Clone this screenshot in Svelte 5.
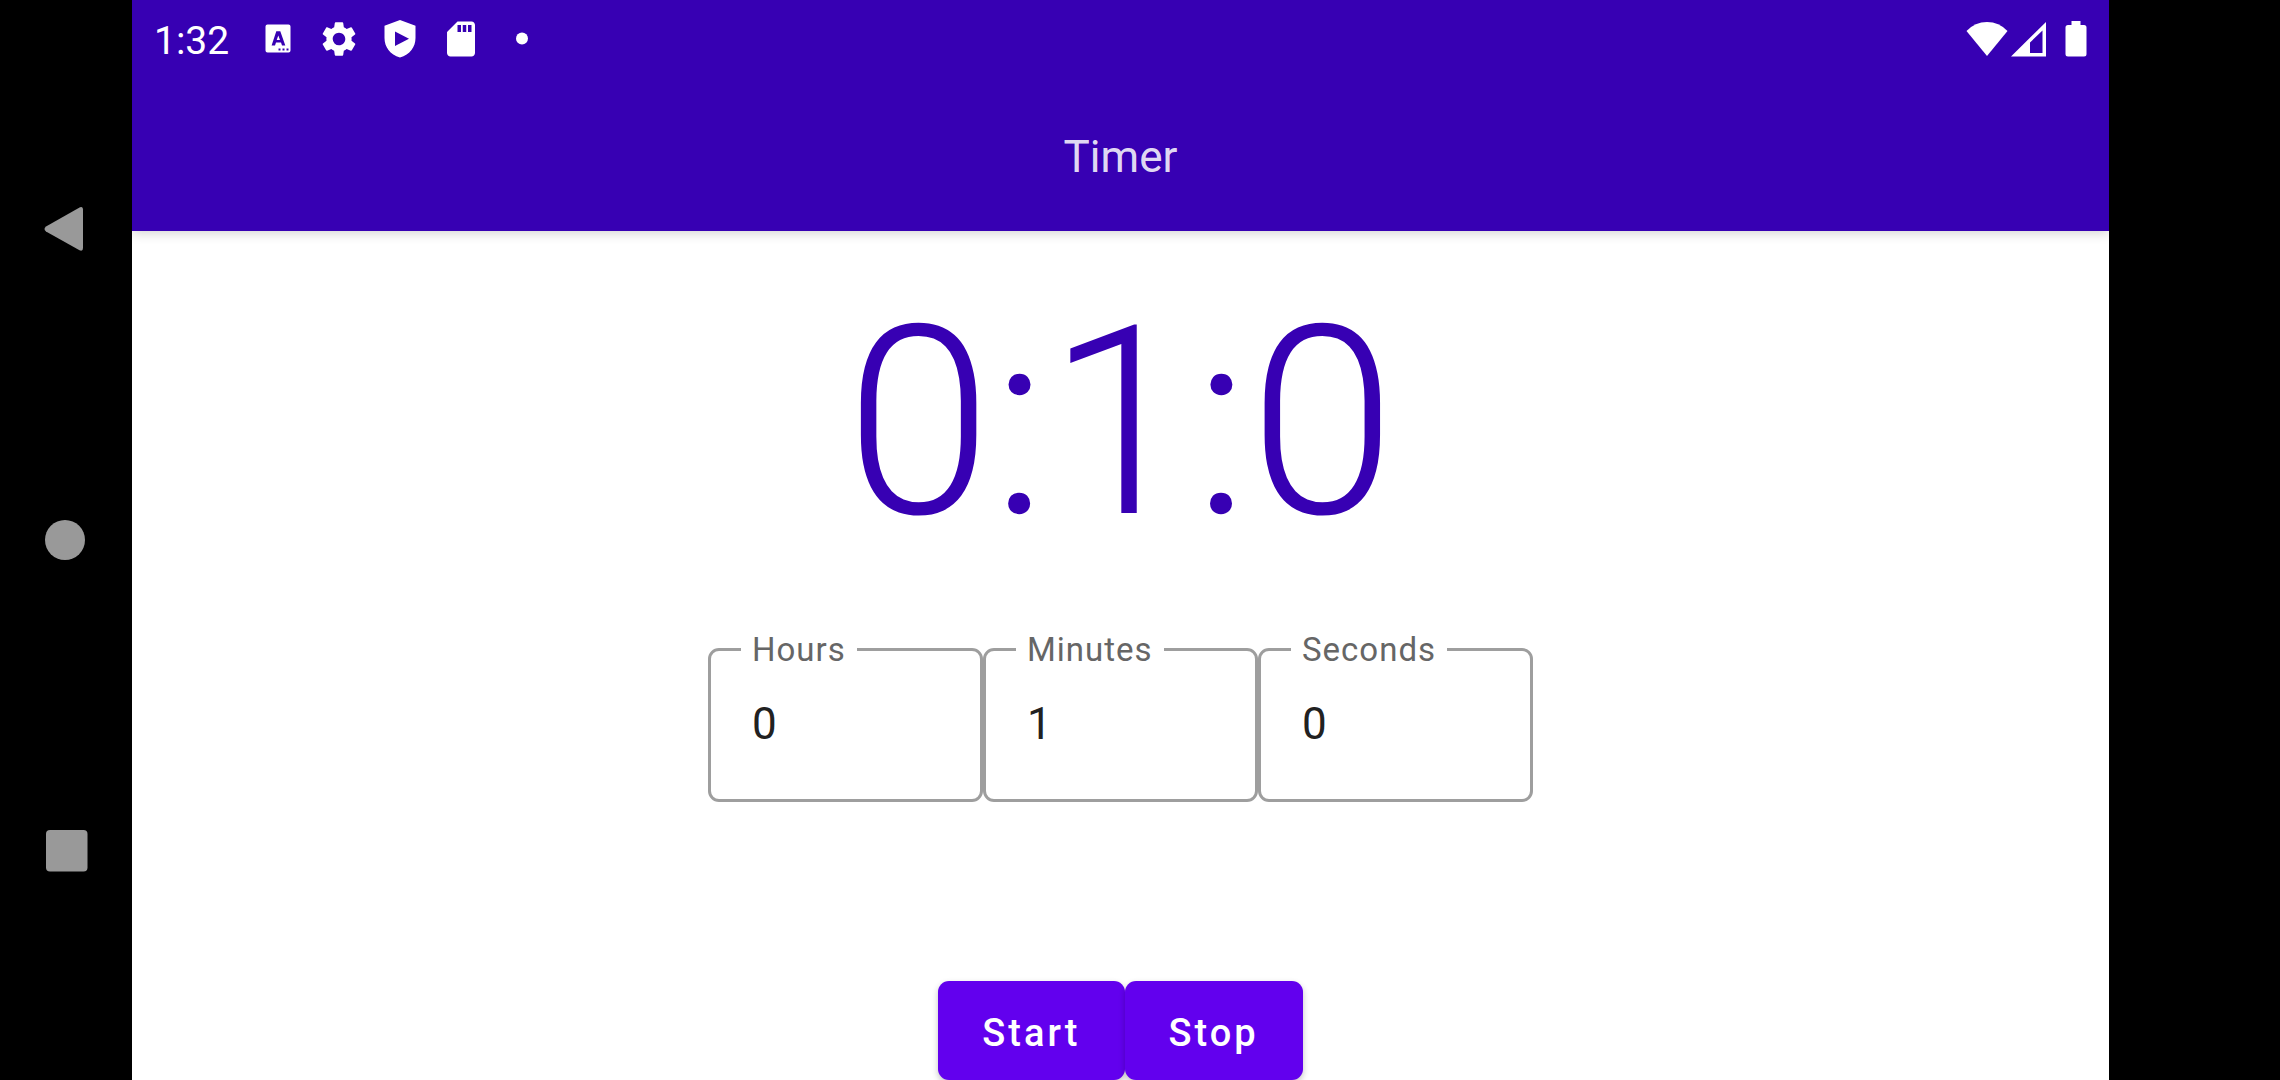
<script>
  import { onDestroy } from 'svelte';

  let fields = $state([
    { id: 'hours', label: 'Hours', value: '0' },
    { id: 'minutes', label: 'Minutes', value: '1' },
    { id: 'seconds', label: 'Seconds', value: '0' }
  ]);
  let left = $state(60);
  let ticker;

  const display = $derived(
    [Math.floor(left / 3600), Math.floor(left / 60) % 60, left % 60].join(':')
  );

  function reset() {
    const [h, m, s] = fields.map((f) => parseInt(f.value, 10) || 0);
    left = h * 3600 + m * 60 + s;
  }

  function stop() {
    clearInterval(ticker);
  }

  function start() {
    stop();
    ticker = setInterval(() => {
      if (left > 0) left -= 1;
      else stop();
    }, 1000);
  }

  onDestroy(stop);
</script>

<div class="screen">
  <nav class="system-nav" aria-label="System navigation">
    <button type="button" aria-label="Back">
      <svg viewBox="0 0 66 66"><path d="M47 11.300Q50 10 50 13.500V52Q50 55.700 46.500 54.300L13 35.500Q10 33 13 30.500Z" /></svg>
    </button>
    <button type="button" aria-label="Home">
      <svg viewBox="0 0 66 66"><circle cx="32" cy="33" r="20" /></svg>
    </button>
    <button type="button" aria-label="Recent apps">
      <svg viewBox="0 0 66 66"><rect x="13" y="12" width="41.500" height="41.500" rx="4" /></svg>
    </button>
  </nav>

  <div class="app">
    <header>
      <div class="status">
        <time>1:32</time>
        <div class="notices">
          <svg viewBox="0 0 42 42">
            <path fill-rule="evenodd" d="M10.500 6.500h21a2 2 0 0 1 2 2v24a2 2 0 0 1-2 2h-21a2 2 0 0 1-2-2v-24a2 2 0 0 1 2-2ZM19.300 13.200 14.600 27.500h3.400l1-3h5l1 3h3.300L23.300 13.200ZM21.300 17.500l1.700 4.600h-3.300ZM21.500 30.500v2h2v-2ZM25.500 30.500v2h2v-2ZM29.500 30.500v2h2v-2Z" />
          </svg>
          <svg viewBox="0 0 24 24">
            <path d="M19.140 12.940c.04-.3.06-.61.06-.94 0-.32-.02-.64-.07-.94l2.030-1.580a.49.49 0 0 0 .12-.61l-1.920-3.320a.488.488 0 0 0-.59-.22l-2.390.96c-.5-.38-1.030-.7-1.620-.94l-.36-2.540a.484.484 0 0 0-.48-.41h-3.840c-.24 0-.43.17-.47.41l-.36 2.540c-.59.24-1.130.57-1.620.94l-2.390-.96c-.22-.08-.47 0-.59.22L2.740 8.870c-.12.21-.08.47.12.61l2.030 1.580c-.05.3-.09.63-.09.94s.02.64.07.94l-2.030 1.580a.49.49 0 0 0-.12.61l1.920 3.320c.12.22.37.29.59.22l2.390-.96c.5.38 1.030.7 1.620.94l.36 2.540c.05.24.24.41.48.41h3.840c.24 0 .44-.17.47-.41l.36-2.540c.59-.24 1.130-.56 1.620-.94l2.390.96c.22.08.47 0 .59-.22l1.920-3.320c.12-.22.07-.47-.12-.61l-2.010-1.580ZM12 15.600A3.610 3.610 0 0 1 8.400 12c0-1.980 1.620-3.600 3.600-3.600s3.600 1.620 3.600 3.600-1.620 3.600-3.600 3.600Z" />
          </svg>
          <svg viewBox="0 0 42 42">
            <path fill-rule="evenodd" d="M21 2 36.500 7.700V20C36.500 29 31 36.500 21 39.500 11 36.500 5.500 29 5.500 20V7.700ZM16 13.500V28L30 20.700Z" />
          </svg>
          <svg viewBox="0 0 24 24">
            <path d="M18 2h-8L4.020 8 4 20c0 1.100.9 2 2 2h12c1.100 0 2-.9 2-2V4c0-1.100-.9-2-2-2Zm-6 6h-2V4h2v4Zm3 0h-2V4h2v4Zm3 0h-2V4h2v4Z" />
          </svg>
          <svg viewBox="0 0 42 42"><circle cx="21" cy="20.500" r="6" /></svg>
        </div>
        <div class="signals">
          <svg viewBox="0 0 42 42"><path d="M.5 13Q9 4 21 4T41.500 13L21 38Z" /></svg>
          <svg viewBox="0 0 42 42"><path fill-rule="evenodd" d="M3 38.500 38 4V38.500ZM22 24.500V35H34.500V12.500Z" /></svg>
          <svg class="battery" viewBox="0 0 42 42"><path d="M16.500 3h9v4H29a2.500 2.500 0 0 1 2.500 2.500V36a2.500 2.500 0 0 1-2.500 2.500H13a2.500 2.500 0 0 1-2.500-2.500V9.500A2.500 2.500 0 0 1 13 7h3.500Z" /></svg>
        </div>
      </div>
      <h1>Timer</h1>
    </header>

    <main>
      <div class="display" role="timer">{display}</div>
      <div class="fields">
        {#each fields as field (field.id)}
          <fieldset>
            <legend><label for={field.id}>{field.label}</label></legend>
            <input id={field.id} type="text" inputmode="numeric" bind:value={field.value} oninput={reset} />
          </fieldset>
        {/each}
      </div>
      <div class="actions">
        <button type="button" onclick={start}>Start</button>
        <button type="button" onclick={stop}>Stop</button>
      </div>
    </main>
  </div>
</div>

<style>
  :global(body) {
    margin: 0;
    background: #000;
  }

  .screen {
    display: flex;
    min-height: 100vh;
    padding-right: 171px;
    box-sizing: border-box;
    font-family: Roboto, 'Liberation Sans', sans-serif;
  }

  button {
    border: 0;
    font-family: inherit;
    cursor: pointer;
  }

  .system-nav {
    flex: 0 0 132px;
    display: flex;
    flex-direction: column;
    justify-content: space-evenly;
  }

  .system-nav button {
    display: flex;
    align-items: center;
    justify-content: center;
    height: 165px;
    padding: 0;
    background: none;
  }

  .system-nav svg {
    width: 66px;
    height: 66px;
    fill: #999;
  }

  .app {
    flex: 1;
    min-width: 0;
    display: flex;
    flex-direction: column;
    background: #fff;
  }

  header {
    background: #3700b3;
    color: #fff;
    box-shadow: 0 2px 11px rgba(0, 0, 0, 0.18);
    clip-path: inset(0 0 -22px 0);
  }

  .status {
    display: flex;
    align-items: center;
    height: 77px;
    padding: 0 12px 0 22px;
  }

  time {
    padding-top: 4px;
    margin-right: 28px;
    font-size: 39px;
    line-height: 46px;
  }

  .notices {
    display: flex;
    gap: 19px;
  }

  .signals {
    display: flex;
    margin-left: auto;
  }

  .status svg {
    width: 42px;
    height: 42px;
    fill: #fff;
  }

  .signals .battery {
    margin-left: 5px;
  }

  h1 {
    margin: 0;
    padding: 54px 0 48px;
    font-size: 44px;
    font-weight: 400;
    line-height: 52px;
    text-align: center;
    color: rgba(255, 255, 255, 0.87);
  }

  main {
    display: flex;
    flex-direction: column;
    align-items: center;
    padding-top: 37px;
  }

  .display {
    font-size: 264px;
    font-weight: 300;
    line-height: 309px;
    color: #3700b3;
  }

  .fields {
    display: flex;
    margin-top: 53px;
  }

  fieldset {
    box-sizing: border-box;
    width: 275px;
    min-width: 0;
    margin: 0;
    padding: 0 41px 0 30px;
    border: 3px solid #9e9e9e;
    border-radius: 11px;
  }

  legend {
    padding: 0 11px;
    font-size: 33px;
    line-height: 39px;
    letter-spacing: 1px;
    color: #666;
  }

  input {
    display: block;
    box-sizing: border-box;
    width: 100%;
    height: 130px;
    margin: 0;
    padding: 29px 0 49px 11px;
    border: 0;
    outline: 0;
    background: none;
    font-family: inherit;
    font-size: 44px;
    line-height: 52px;
    color: #212121;
  }

  .actions {
    display: flex;
    margin-top: 179px;
  }

  .actions button {
    height: 99px;
    padding: 4px 44px 0;
    border-radius: 11px;
    background: #6200ee;
    box-shadow: 0 3px 6px rgba(0, 0, 0, 0.24);
    color: #fff;
    font-size: 38px;
    font-weight: 500;
    line-height: 46px;
    letter-spacing: 3px;
  }
</style>
